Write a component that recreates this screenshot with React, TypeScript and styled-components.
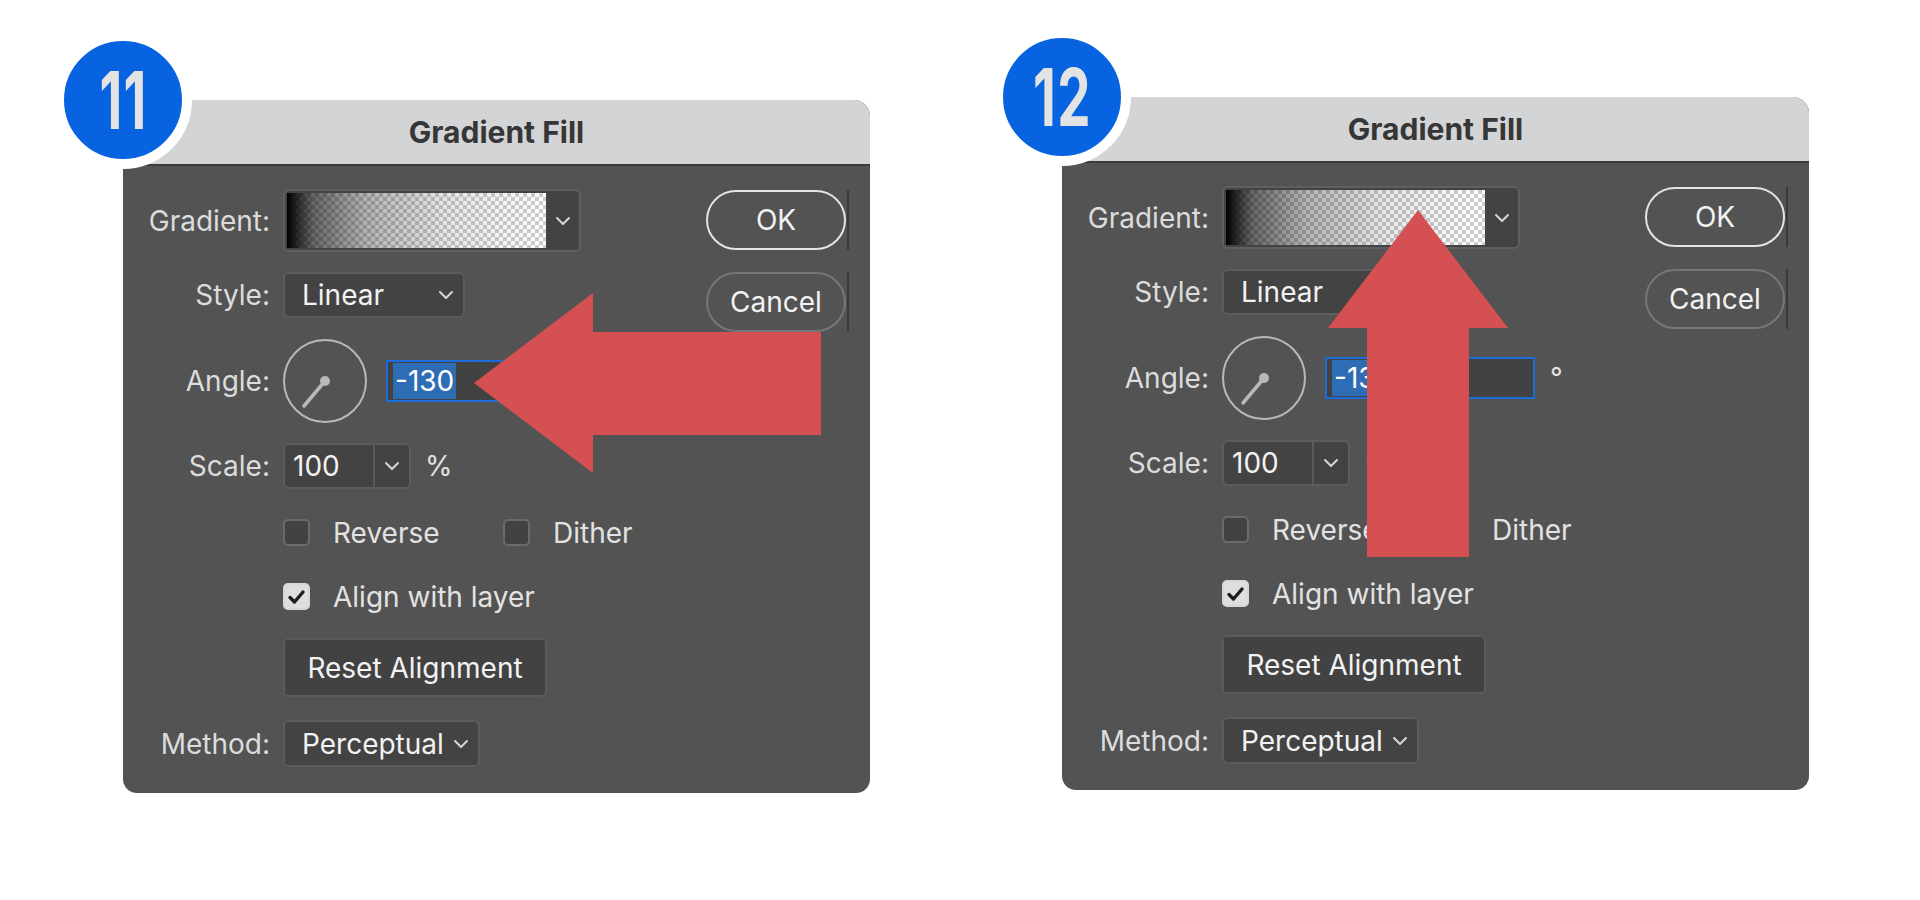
import React from "react";
import styled, { createGlobalStyle } from "styled-components";

const GlobalStyle = createGlobalStyle`
  html, body {
    margin: 0;
    padding: 0;
    background: #ffffff;
  }
  body {
    font-family: Inter, "Liberation Sans", sans-serif;
  }
`;

const Page = styled.div`
  width: 1920px;
  height: 900px;
  box-sizing: border-box;
  padding: 100px 0 0 123px;
  display: flex;
  align-items: flex-start;
  gap: 192px;
`;

const Dialog = styled.div<{ $shift?: number }>`
  position: relative;
  width: 747px;
  height: 693px;
  margin-top: ${(p) => p.$shift || 0}px;
  display: flex;
  flex-direction: column;
  background: #535353;
  border-radius: 16px 16px 14px 14px;
`;

const TitleBar = styled.div`
  height: 64px;
  flex-shrink: 0;
  display: flex;
  align-items: center;
  justify-content: center;
  background: #d3d4d6;
  border-bottom: 2px solid #3b3b3b;
  border-radius: 16px 16px 0 0;
  color: #363636;
  font-size: 30px;
  font-weight: 700;
`;

const Badge = styled.div`
  position: absolute;
  left: -69px;
  top: -69px;
  width: 118px;
  height: 118px;
  border: 10px solid #ffffff;
  border-radius: 50%;
  background: #0863e0;
  display: flex;
  align-items: center;
  justify-content: center;
  z-index: 2;

  span {
    display: block;
    color: #e3e3e3;
    font-size: 80px;
    font-weight: 700;
    line-height: 1;
    letter-spacing: 2px;
    transform: scaleX(0.66);
  }
`;

const Body = styled.div`
  flex: 1;
  display: flex;
  padding: 23px 21px 0 0;
`;

const Form = styled.div`
  flex: 1;
  display: flex;
  flex-direction: column;
`;

const Row = styled.div<{ $top: number; $h: number }>`
  display: flex;
  align-items: center;
  height: ${(p) => p.$h}px;
  margin-top: ${(p) => p.$top}px;
  color: #e2e2e2;
  font-size: 28px;
`;

const Label = styled.div`
  width: 147px;
  margin-right: 13px;
  flex-shrink: 0;
  text-align: right;
  color: #dcdcdc;
  font-size: 28px;
`;

const GradientPicker = styled.div`
  width: 298px;
  height: 63px;
  box-sizing: border-box;
  display: flex;
  border: 2px solid #5f5f5f;
  border-radius: 6px;
  background: #434343;
  overflow: hidden;
`;

const Swatch = styled.div`
  flex: 1;
  margin: 2px 0 2px 2px;
  background-image: linear-gradient(
      to right,
      rgba(0, 0, 0, 1) 0%,
      rgba(0, 0, 0, 0.6) 10%,
      rgba(0, 0, 0, 0.3) 30%,
      rgba(0, 0, 0, 0.1) 60%,
      rgba(0, 0, 0, 0) 100%
    ),
    conic-gradient(#cdcdcd 25%, #ffffff 0 50%, #cdcdcd 0 75%, #ffffff 0);
  background-size: 100% 100%, 8px 8px;
`;

const ArrowCell = styled.div<{ $w: number; $divider?: boolean }>`
  width: ${(p) => p.$w}px;
  flex-shrink: 0;
  display: flex;
  align-items: center;
  justify-content: center;
  border-left: ${(p) => (p.$divider ? "2px solid #5a5a5a" : "none")};
`;

const Select = styled.div<{ $w: number; $h: number }>`
  width: ${(p) => p.$w}px;
  height: ${(p) => p.$h}px;
  box-sizing: border-box;
  display: flex;
  align-items: center;
  justify-content: space-between;
  padding: 0 9px 0 17px;
  border: 2px solid #5c5c5c;
  border-radius: 6px;
  background: #434343;
  color: #f2f2f2;
  font-size: 28px;
`;

const Dial = styled.svg`
  width: 86px;
  height: 86px;
  flex-shrink: 0;
  margin-left: -1px;
`;

const AngleInput = styled.div`
  width: 210px;
  height: 42px;
  box-sizing: border-box;
  margin-left: 18px;
  display: flex;
  align-items: center;
  padding-left: 5px;
  border: 2px solid #1b6ddd;
  background: #424242;
  color: #ffffff;
  font-size: 28px;

  span {
    background: #2e6db4;
    line-height: 36px;
    padding: 0 2px;
  }
`;

const Unit = styled.div<{ $gap: number }>`
  margin-left: ${(p) => p.$gap}px;
  color: #e2e2e2;
  font-size: 28px;
`;

const ScaleBox = styled.div`
  width: 128px;
  height: 46px;
  box-sizing: border-box;
  display: flex;
  border: 2px solid #5c5c5c;
  border-radius: 6px;
  background: #434343;
  color: #f2f2f2;
  font-size: 28px;
  overflow: hidden;
`;

const ScaleValue = styled.div`
  flex: 1;
  display: flex;
  align-items: center;
  padding-left: 8px;
`;

const CheckItem = styled.div<{ $w?: number }>`
  display: flex;
  align-items: center;
  width: ${(p) => (p.$w ? `${p.$w}px` : "auto")};
  gap: 23px;
`;

const Box = styled.div<{ $checked?: boolean }>`
  width: 27px;
  height: 27px;
  box-sizing: border-box;
  display: flex;
  align-items: center;
  justify-content: center;
  border: 2px solid ${(p) => (p.$checked ? "#d8d8d8" : "#6a6a6a")};
  border-radius: 5px;
  background: ${(p) => (p.$checked ? "#dedede" : "#424242")};
`;

const ResetButton = styled.div`
  width: 264px;
  height: 59px;
  box-sizing: border-box;
  display: flex;
  align-items: center;
  justify-content: center;
  border: 2px solid #5a5a5a;
  border-radius: 5px;
  background: #424242;
  color: #f2f2f2;
  font-size: 28px;
`;

const ButtonColumn = styled.div`
  width: 143px;
  margin-top: 1px;
  display: flex;
  flex-direction: column;
  gap: 22px;
`;

const ButtonSlot = styled.div`
  display: flex;
  padding-right: 1px;
  border-right: 2px solid #3a3a3a;
`;

const Pill = styled.div<{ $primary?: boolean }>`
  width: 140px;
  height: 60px;
  box-sizing: border-box;
  display: flex;
  align-items: center;
  justify-content: center;
  border: 2px solid ${(p) => (p.$primary ? "#e4e4e4" : "#777777")};
  border-radius: 30px;
  color: #f2f2f2;
  font-size: 28px;
`;

const Pointer = styled.svg<{ $x: number; $y: number }>`
  position: absolute;
  left: ${(p) => p.$x}px;
  top: ${(p) => p.$y}px;
  z-index: 3;
`;

const Chevron = () => (
  <svg width="16" height="10" viewBox="0 0 16 10">
    <polyline
      points="2,2 8,8 14,2"
      fill="none"
      stroke="#d6d6d6"
      strokeWidth="2"
      strokeLinecap="round"
      strokeLinejoin="round"
    />
  </svg>
);

const Tick = () => (
  <svg width="19" height="16" viewBox="0 0 19 16">
    <polyline
      points="3,8.5 7.5,13 16,3"
      fill="none"
      stroke="#1e1e1e"
      strokeWidth="3.4"
      strokeLinecap="round"
      strokeLinejoin="round"
    />
  </svg>
);

type ArrowProps = { dir: "left" | "up" };

const RedArrow = ({ dir }: ArrowProps) =>
  dir === "left" ? (
    <Pointer $x={351} $y={193} width="347" height="180" viewBox="0 0 347 180">
      <polygon
        points="0,90 119,0 119,39 347,39 347,142 119,142 119,180"
        fill="#d55052"
      />
    </Pointer>
  ) : (
    <Pointer $x={266} $y={113} width="180" height="347" viewBox="0 0 180 347">
      <polygon
        points="90,0 180,118 141,118 141,347 39,347 39,118 0,118"
        fill="#d55052"
      />
    </Pointer>
  );

type DialogProps = { step: string; arrow: "left" | "up"; shift?: number };

const GradientFillDialog = ({ step, arrow, shift }: DialogProps) => (
  <Dialog $shift={shift}>
    <Badge>
      <span>{step}</span>
    </Badge>
    <TitleBar>Gradient Fill</TitleBar>
    <Body>
      <Form>
        <Row $top={0} $h={63}>
          <Label>Gradient:</Label>
          <GradientPicker>
            <Swatch />
            <ArrowCell $w={33}>
              <Chevron />
            </ArrowCell>
          </GradientPicker>
        </Row>
        <Row $top={20} $h={46}>
          <Label>Style:</Label>
          <Select $w={182} $h={46}>
            Linear
            <Chevron />
          </Select>
        </Row>
        <Row $top={21} $h={84}>
          <Label>Angle:</Label>
          <Dial viewBox="0 0 86 86">
            <circle cx="43" cy="43" r="41" fill="none" stroke="#b9b9b9" strokeWidth="2" />
            <line
              x1="43"
              y1="43"
              x2="22"
              y2="68"
              stroke="#b9b9b9"
              strokeWidth="3.5"
              strokeLinecap="round"
            />
            <circle cx="43" cy="43" r="5" fill="#b9b9b9" />
          </Dial>
          <AngleInput>
            <span>-130</span>
          </AngleInput>
          <Unit $gap={15}>°</Unit>
        </Row>
        <Row $top={20} $h={46}>
          <Label>Scale:</Label>
          <ScaleBox>
            <ScaleValue>100</ScaleValue>
            <ArrowCell $w={34} $divider>
              <Chevron />
            </ArrowCell>
          </ScaleBox>
          <Unit $gap={14}>%</Unit>
        </Row>
        <Row $top={30} $h={27}>
          <Label />
          <CheckItem $w={220}>
            <Box />
            Reverse
          </CheckItem>
          <CheckItem>
            <Box />
            Dither
          </CheckItem>
        </Row>
        <Row $top={37} $h={27}>
          <Label />
          <CheckItem>
            <Box $checked>
              <Tick />
            </Box>
            Align with layer
          </CheckItem>
        </Row>
        <Row $top={28} $h={59}>
          <Label />
          <ResetButton>Reset Alignment</ResetButton>
        </Row>
        <Row $top={23} $h={47}>
          <Label>Method:</Label>
          <Select $w={197} $h={47}>
            Perceptual
            <Chevron />
          </Select>
        </Row>
      </Form>
      <ButtonColumn>
        <ButtonSlot>
          <Pill $primary>OK</Pill>
        </ButtonSlot>
        <ButtonSlot>
          <Pill>Cancel</Pill>
        </ButtonSlot>
      </ButtonColumn>
    </Body>
    <RedArrow dir={arrow} />
  </Dialog>
);

export default function App() {
  return (
    <>
      <GlobalStyle />
      <Page>
        <GradientFillDialog step="11" arrow="left" />
        <GradientFillDialog step="12" arrow="up" shift={-3} />
      </Page>
    </>
  );
}
